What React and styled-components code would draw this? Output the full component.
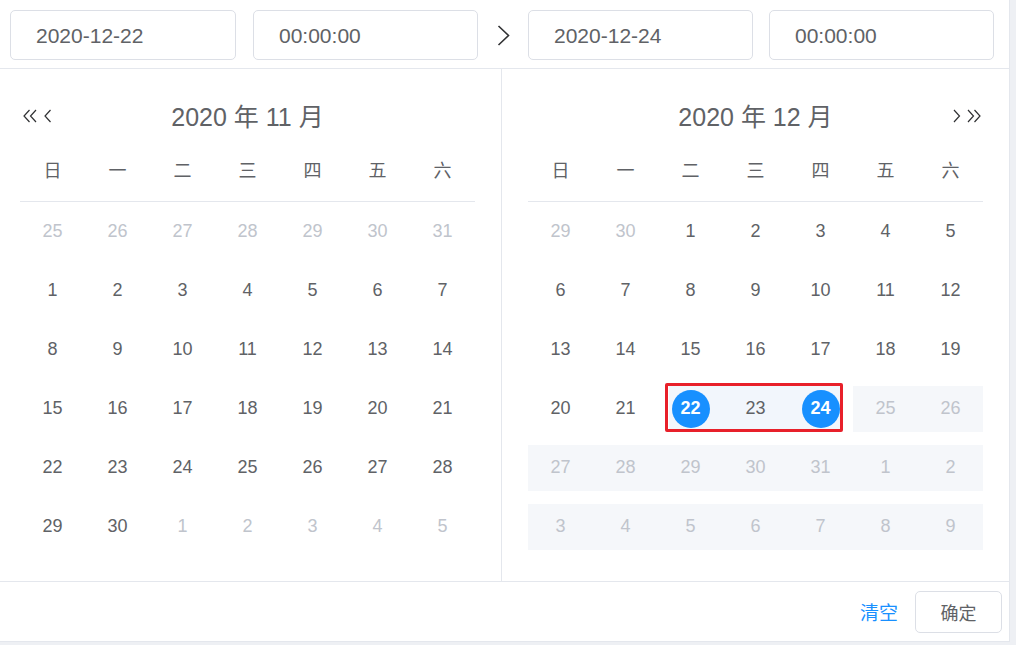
import React from "react";
import styled, { createGlobalStyle } from "styled-components";

const GlobalStyle = createGlobalStyle`
  html, body { margin: 0; padding: 0; }
  body {
    background: #eef0f4;
    font-family: "Liberation Sans", Arial, "Noto Sans CJK SC", sans-serif;
    color: #606266;
  }
`;

const Picker = styled.div`
  width: 1010px;
  background: #fff;
  border-right: 1px solid #e4e7ed;
  border-bottom: 1px solid #e4e7ed;
  box-sizing: border-box;
`;

const InputBar = styled.div`
  box-sizing: border-box;
  display: flex;
  align-items: flex-start;
  height: 69px;
  padding: 10px 0 0 10px;
  border-bottom: 1px solid #e4e7ed;
`;

const Field = styled.div`
  box-sizing: border-box;
  width: ${(p) => p.$w}px;
  height: 50px;
  margin-right: ${(p) => p.$gap || 0}px;
  border: 1px solid #dcdfe6;
  border-radius: 5px;
  display: flex;
  align-items: center;
  padding: 2px 0 0 25px;
  font-size: 21px;
  color: #606266;
`;

const RangeArrow = styled.div`
  width: 50px;
  height: 50px;
  display: flex;
  justify-content: center;
  align-items: center;
  color: #303133;
`;

const Body = styled.div`
  display: flex;
  height: 512px;
`;

const Panel = styled.div`
  box-sizing: border-box;
  width: ${(p) => (p.$left ? "502px" : "auto")};
  flex: ${(p) => (p.$left ? "none" : "1")};
  padding: 28px 26px 0 ${(p) => (p.$left ? 20 : 26)}px;
  border-right: ${(p) => (p.$left ? "1px solid #e4e7ed" : "none")};
`;

const Header = styled.div`
  display: grid;
  grid-template-columns: 1fr auto 1fr;
  align-items: center;
  height: 36px;
  width: 455px;
`;

const Nav = styled.div`
  display: flex;
  align-items: center;
  gap: 6px;
  justify-content: ${(p) => (p.$right ? "flex-end" : "flex-start")};
  padding: ${(p) => (p.$right ? "2px 1px 0 0" : "2px 0 0 3px")};
  color: #303133;
`;

const Title = styled.div`
  font-size: 25px;
  color: #606266;
  white-space: pre;
`;

const WeekHead = styled.div`
  display: grid;
  grid-template-columns: repeat(7, 65px);
  width: 455px;
  padding: 24px 0 20px;
  border-bottom: 1px solid #e4e7ed;
`;

const WeekLabel = styled.div`
  text-align: center;
  font-size: 18px;
  line-height: 24px;
  color: #606266;
  font-family: "Noto Sans CJK SC", sans-serif;
`;

const WeekRow = styled.div`
  position: relative;
  display: grid;
  grid-template-columns: repeat(7, 65px);
  width: 455px;
  height: 59px;
`;

const Cell = styled.div`
  display: flex;
  align-items: center;
`;

const rangeBg = {
  start: "linear-gradient(to right, transparent 11px, #f2f6fc 11px)",
  end: "linear-gradient(to left, transparent 11px, #f2f6fc 11px)",
  range: "#f2f6fc",
  disabled: "#f5f7fa",
};

const CellInner = styled.div`
  flex: 1;
  height: 46px;
  display: flex;
  align-items: center;
  justify-content: center;
  font-size: 18px;
  color: ${(p) =>
    p.$kind === "other" || p.$kind === "disabled" ? "#c0c4cc" : "#606266"};
  background: ${(p) => rangeBg[p.$kind] || "transparent"};
`;

const Circle = styled.span`
  width: 38px;
  height: 38px;
  border-radius: 50%;
  background: #1890ff;
  color: #fff;
  font-weight: bold;
  display: flex;
  align-items: center;
  justify-content: center;
  font-size: 18px;
`;

const Annotation = styled.div`
  position: absolute;
  left: 137px;
  top: 4px;
  width: 178px;
  height: 49px;
  box-sizing: border-box;
  border: 3px solid #e8202a;
  border-radius: 2px;
  pointer-events: none;
`;

const Footer = styled.div`
  display: flex;
  justify-content: flex-end;
  align-items: center;
  gap: 17px;
  height: 59px;
  padding-right: 7px;
  border-top: 1px solid #e4e7ed;
`;

const TextButton = styled.span`
  font-size: 19px;
  color: #1890ff;
  font-family: "Noto Sans CJK SC", sans-serif;
`;

const Button = styled.div`
  box-sizing: border-box;
  width: 87px;
  height: 42px;
  border: 1px solid #dcdfe6;
  border-radius: 5px;
  display: flex;
  align-items: center;
  justify-content: center;
  font-size: 18px;
  color: #606266;
  font-family: "Noto Sans CJK SC", sans-serif;
`;

const Chevron = ({ dir = "left", double = false }) => {
  const w = double ? 15 : 8;
  const pts = (x) =>
    dir === "left"
      ? `M${x + 6.5} 1 L${x + 1} 7 L${x + 6.5} 13`
      : `M${x + 1} 1 L${x + 6.5} 7 L${x + 1} 13`;
  return (
    <svg width={w} height="14" viewBox={`0 0 ${w} 14`} fill="none">
      <path d={pts(0)} stroke="currentColor" strokeWidth="1.2" />
      {double && <path d={pts(6.5)} stroke="currentColor" strokeWidth="1.2" />}
    </svg>
  );
};

const weekdays = ["日", "一", "二", "三", "四", "五", "六"];

const build = (items) => {
  const rows = [];
  for (let i = 0; i < items.length; i += 7) rows.push(items.slice(i, i + 7));
  return rows;
};

const nov = build([
  ...[25, 26, 27, 28, 29, 30, 31].map((d) => ({ d, k: "other" })),
  ...Array.from({ length: 30 }, (_, i) => ({ d: i + 1, k: "normal" })),
  ...[1, 2, 3, 4, 5].map((d) => ({ d, k: "other" })),
]);

const dec = build([
  ...[29, 30].map((d) => ({ d, k: "other" })),
  ...Array.from({ length: 31 }, (_, i) => {
    const d = i + 1;
    let k = "normal";
    if (d === 22) k = "start";
    else if (d === 23) k = "range";
    else if (d === 24) k = "end";
    else if (d >= 25) k = "disabled";
    return { d, k };
  }),
  ...[1, 2, 3, 4, 5, 6, 7, 8, 9].map((d) => ({ d, k: "disabled" })),
]);

const Month = ({ left, title, rows, annotateRow }) => (
  <Panel $left={left}>
    <Header>
      <Nav>
        {left && (
          <>
            <Chevron dir="left" double />
            <Chevron dir="left" />
          </>
        )}
      </Nav>
      <Title>{title}</Title>
      <Nav $right>
        {!left && (
          <>
            <Chevron dir="right" />
            <Chevron dir="right" double />
          </>
        )}
      </Nav>
    </Header>
    <WeekHead>
      {weekdays.map((w) => (
        <WeekLabel key={w}>{w}</WeekLabel>
      ))}
    </WeekHead>
    {rows.map((row, ri) => (
      <WeekRow key={ri}>
        {row.map((c, ci) => (
          <Cell key={ci}>
            <CellInner $kind={c.k}>
              {c.k === "start" || c.k === "end" ? <Circle>{c.d}</Circle> : c.d}
            </CellInner>
          </Cell>
        ))}
        {annotateRow === ri && <Annotation />}
      </WeekRow>
    ))}
  </Panel>
);

export default function App() {
  return (
    <>
      <GlobalStyle />
      <Picker>
        <InputBar>
          <Field $w={226} $gap={17}>2020-12-22</Field>
          <Field $w={225}>00:00:00</Field>
          <RangeArrow>
            <svg width="13" height="21" viewBox="0 0 13 21" fill="none">
              <path d="M1.5 1 L11.5 10.5 L1.5 20" stroke="currentColor" strokeWidth="1.6" />
            </svg>
          </RangeArrow>
          <Field $w={225} $gap={16}>2020-12-24</Field>
          <Field $w={225}>00:00:00</Field>
        </InputBar>
        <Body>
          <Month left title="2020 年 11 月" rows={nov} />
          <Month title="2020 年 12 月" rows={dec} annotateRow={3} />
        </Body>
        <Footer>
          <TextButton>清空</TextButton>
          <Button>确定</Button>
        </Footer>
      </Picker>
    </>
  );
}
